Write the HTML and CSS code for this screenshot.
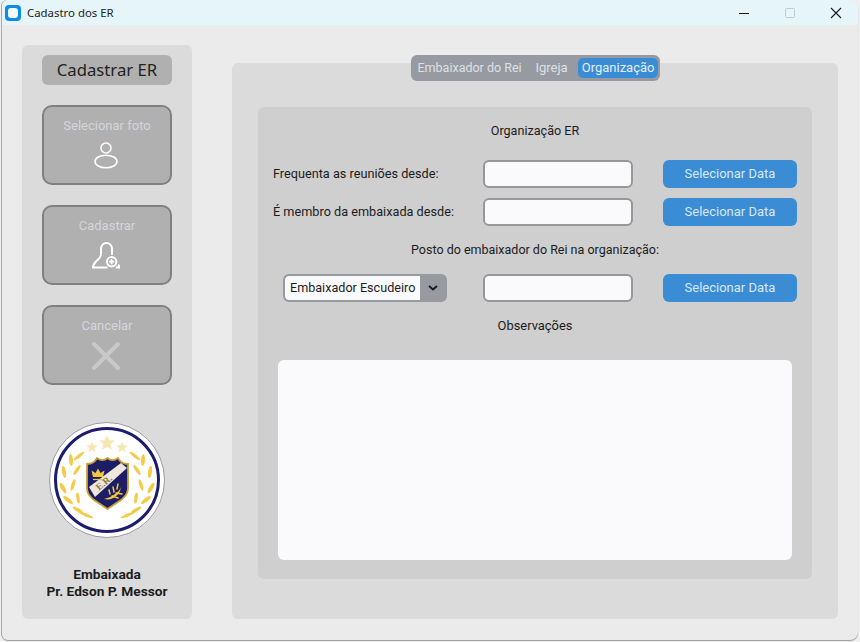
FILE: index.html
```html
<!DOCTYPE html>
<html lang="en">
<head>
  <meta charset="UTF-8" />
  <meta name="viewport" content="width=device-width, initial-scale=1.0"/>
  <title>Cadastro dos ER</title>
  <link rel="stylesheet" href="styles.css">
</head>
<body>

  <div class="window">
    <div class="title-bar">
      <div class="app-icon"><span></span></div>
      <div class="app-title">Cadastro dos ER</div>
      <div class="win-controls">
        <svg width="12" height="12" viewBox="0 0 12 12"><path d="M1 6.500h10" stroke="#1a1a1a" stroke-width="1"/></svg>
        <svg width="12" height="12" viewBox="0 0 12 12"><rect x="1.500" y="1.500" width="9" height="9" rx="1" fill="none" stroke="#c4c9cc"/></svg>
        <svg width="12" height="12" viewBox="0 0 12 12"><path d="M1 1l10 10M11 1L1 11" stroke="#1a1a1a" stroke-width="1.100"/></svg>
      </div>
    </div>

    <div class="content">
      <aside class="sidebar">
        <div class="side-title">Cadastrar ER</div>

        <div class="side-button">
          <span>Selecionar foto</span>
          <svg width="28" height="28" viewBox="0 0 28 28" fill="none" stroke="#fff" stroke-width="1.600">
            <circle cx="14" cy="7" r="5"/>
            <ellipse cx="14" cy="20.500" rx="11" ry="6.300"/>
          </svg>
        </div>

        <div class="side-button">
          <span>Cadastrar</span>
          <svg width="28" height="28" viewBox="0 0 28 28" fill="none" stroke="#fff" stroke-width="2">
            <path d="M9 13.500V7.500a5.500 5.500 0 0 1 11 0V14"/>
            <path d="M9 13.500c0 3-2 4-4.500 6.500-2.500 2.500-3.500 4-3.500 6.500h14.500"/>
            <path d="M24 26.500h3.500c0-1-.5-2-1.500-2.500"/>
            <circle cx="19.700" cy="20.700" r="4.700"/>
            <path d="M19.700 18.200v5M17.200 20.700h5" stroke-width="1.800"/>
          </svg>
        </div>

        <div class="side-button">
          <span>Cancelar</span>
          <svg width="30" height="30" viewBox="0 0 30 30" fill="none" stroke="#c9c9c9" stroke-width="4" stroke-linecap="round">
            <path d="M3 3l24 24M27 3L3 27"/>
          </svg>
        </div>

        <svg class="logo" width="116" height="116" viewBox="0 0 116 116">
          <circle cx="58" cy="58" r="57.500" fill="#fff" stroke="#9a9aa6" stroke-width="1"/>
          <circle cx="58" cy="58" r="51.500" fill="#fff" stroke="#1d1d6e" stroke-width="3"/>
          <g fill="#f6e6b2">
            <path d="M58 13l2.200 5.200 5.600.4-4.300 3.600 1.400 5.500-4.900-3-4.900 3 1.400-5.500-4.300-3.600 5.600-.4z"/>
            <path d="M43 19.500l1.600 3.800 4.100.3-3.100 2.700 1 4-3.600-2.200-3.600 2.200 1-4-3.100-2.700 4.100-.3z"/>
            <path d="M73 19.500l1.600 3.800 4.100.3-3.100 2.700 1 4-3.600-2.200-3.600 2.200 1-4-3.100-2.700 4.100-.3z"/>
          </g>
          <g id="wreath" fill="#f5cb4b">
            <ellipse cx="30" cy="34" rx="1.700" ry="6.500" transform="rotate(52 30 34)"/>
            <ellipse cx="22" cy="38" rx="2" ry="6" transform="rotate(-4 22 38)"/>
            <ellipse cx="28" cy="48" rx="1.700" ry="6" transform="rotate(35 28 48)"/>
            <ellipse cx="15" cy="50" rx="2" ry="6" transform="rotate(-10 15 50)"/>
            <ellipse cx="24" cy="63" rx="1.700" ry="6" transform="rotate(18 24 63)"/>
            <ellipse cx="14" cy="66" rx="2" ry="6" transform="rotate(-30 14 66)"/>
            <ellipse cx="29" cy="76" rx="1.700" ry="5.500" transform="rotate(-8 29 76)"/>
            <ellipse cx="19" cy="78" rx="2" ry="6" transform="rotate(-52 19 78)"/>
            <ellipse cx="29" cy="88" rx="1.800" ry="6" transform="rotate(-60 29 88)"/>
            <ellipse cx="37" cy="93" rx="1.500" ry="8" transform="rotate(-68 37 93)"/>
          </g>
          <use href="#wreath" transform="translate(116 0) scale(-1 1)"/>

          <path d="M38 42C43 42 46 40 48 36C52 39 55 39 58.500 36C62 39 65 39 69 36C71 40 74 42 79 42V66C79 76 68 80 58.500 87C49 80 38 76 38 66Z" fill="#1d1d66" stroke="#c9a234" stroke-width="1.800"/>
          <path d="M40 65L72 41L78 46L46 75Z" fill="#ece7da"/>
          <path d="M44 55l-1.500-6.500 4 2.500 2.500-4.500 2.500 4.500 4-2.500-1.500 6.500z" fill="#f4c63c"/>
          <path d="M44 57.500h11" stroke="#f4c63c" stroke-width="1.200"/>
          <text class="logo-text" x="57" y="63" transform="rotate(-40 57 63)">E.R.</text>
          <path d="M55 77c5-1 8-3 11-5 3-2 5-4 6-7-1 5-2 7-5 9-3 3-7 4-12 3z" fill="#f4c63c"/>
          <path d="M61 72l-1-4M65 70l-1-5M68 67l1-5M63 74l6 2M67 71l6 1" stroke="#f4c63c" stroke-width="1.500" stroke-linecap="round"/>
        </svg>

        <div class="side-name">Embaixada<br>Pr. Edson P. Messor</div>
      </aside>

      <main class="main">
        <div class="tabs">
          <div class="tab tab-long">Embaixador do Rei</div>
          <div class="tab">Igreja</div>
          <div class="tab active">Organização</div>
        </div>

        <section class="panel">
          <div class="form">
            <h2 class="form-title">Organização ER</h2>

            <div class="row">
              <label class="row-label">Frequenta as reuniões desde:</label>
              <input class="date-input" type="text">
              <button class="date-button">Selecionar Data</button>
            </div>

            <div class="row">
              <label class="row-label">É membro da embaixada desde:</label>
              <input class="date-input" type="text">
              <button class="date-button">Selecionar Data</button>
            </div>

            <div class="row-title">Posto do embaixador do Rei na organização:</div>

            <div class="row">
              <div class="combo-cell">
                <div class="combo">
                  <div class="combo-value">Embaixador Escudeiro</div>
                  <div class="combo-arrow">
                    <svg width="10" height="6" viewBox="0 0 10 6" fill="none" stroke="#1a1a1a" stroke-width="2"><path d="M1 1l4 3.400L9 1"/></svg>
                  </div>
                </div>
              </div>
              <input class="date-input" type="text">
              <button class="date-button">Selecionar Data</button>
            </div>

            <div class="notes-title">Observações</div>
            <div class="notes"></div>
          </div>
        </section>
      </main>
    </div>
  </div>

</body>
</html>
```

FILE: styles.css
```css
body {
  margin: 0;
  height: 642px;
  overflow: hidden;
  background: #f0f0f0;
  font-family: Roboto, sans-serif;
  color: #1c1c1c;
}

.window {
  width: 856px;
  height: 640px;
  margin-left: 2px;
  background: #ebebeb;
  border-radius: 6px 8px 8px 6px;
  box-shadow: -1px 0 0 #a8a8a8, 0 1px 1px #9a9a9a;
  display: flex;
  flex-direction: column;
  overflow: hidden;
}

.title-bar {
  height: 25px;
  flex-shrink: 0;
  background: #e6f5f9;
  display: flex;
  align-items: center;
  padding-left: 3px;
}

.app-icon {
  width: 16px;
  height: 16px;
  border-radius: 4px;
  background: #0d8ce6;
  display: flex;
  align-items: center;
  justify-content: center;
}

.app-icon span {
  width: 10px;
  height: 10px;
  border-radius: 3px;
  background: #f4fbff;
}

.app-title {
  margin-left: 6px;
  font-family: "Noto Sans", sans-serif;
  font-size: 11.4px;
  color: #222;
}

.win-controls {
  margin-left: auto;
  display: flex;
  align-items: center;
  gap: 34px;
  padding-right: 16px;
}

.content {
  flex: 1;
  display: flex;
  padding: 20px 20px 21px;
}

.sidebar {
  width: 170px;
  margin-right: 40px;
  box-sizing: border-box;
  padding: 10px 20px 0;
  background: #dbdbdb;
  border-radius: 6px;
  display: flex;
  flex-direction: column;
  align-items: center;
  gap: 20px;
}

.side-title {
  width: 100%;
  height: 30px;
  background: #b0b0b0;
  border-radius: 6px;
  font-family: "Noto Sans", sans-serif;
  font-size: 16.7px;
  line-height: 30px;
  text-align: center;
  color: #222;
}

.side-button {
  width: 100%;
  height: 80px;
  flex-shrink: 0;
  box-sizing: border-box;
  border: 2px solid #808080;
  border-radius: 10px;
  background: #b0b0b0;
  color: #d3d6da;
  font-size: 13px;
  display: flex;
  flex-direction: column;
  align-items: center;
  padding-top: 11px;
  gap: 8px;
}

.side-button svg {
  margin-right: 2px;
}

.logo {
  margin-top: 17px;
  flex-shrink: 0;
}

.logo-text {
  font-family: "Liberation Serif", serif;
  font-size: 9.5px;
  font-weight: bold;
  fill: #8a7a4a;
  text-anchor: middle;
}

.side-name {
  margin-top: 8px;
  font-size: 13.7px;
  font-weight: bold;
  line-height: 17px;
  text-align: center;
  white-space: nowrap;
  color: #1c1c1c;
}

.main {
  width: 606px;
  display: flex;
  flex-direction: column;
  align-items: center;
}

.tabs {
  position: relative;
  z-index: 1;
  margin-top: 10px;
  height: 26px;
  width: 249px;
  box-sizing: border-box;
  padding: 3px;
  background: #979aa0;
  border-radius: 6px;
  display: flex;
  font-size: 13px;
  color: #dce1e6;
}

.tab {
  flex-shrink: 0;
  padding: 0 4px;
  margin-right: 6px;
  line-height: 20px;
  border-radius: 5px;
  white-space: nowrap;
}

.tab-long {
  width: 112px;
  box-sizing: border-box;
  font-size: 12.5px;
}

.tab.active {
  margin-right: 0;
  background: #3a8cd4;
  color: #e3eef8;
}

.panel {
  flex: 1;
  width: 100%;
  margin-top: -18px;
  box-sizing: border-box;
  padding: 44px 26px 40px;
  background: #dbdbdb;
  border-radius: 6px;
}

.form {
  height: 100%;
  box-sizing: border-box;
  padding: 0 20px;
  background: #cfcfcf;
  border-radius: 6px;
  display: flex;
  flex-direction: column;
}

.form-title {
  margin: 0;
  height: 53px;
  font-size: 12.6px;
  font-weight: normal;
  line-height: 47px;
  text-align: center;
}

.row {
  display: grid;
  grid-template-columns: 180px 150px 134px;
  column-gap: 30px;
  height: 28px;
  margin: 0 -5px 10px;
  align-items: center;
  font-size: 12.7px;
}

.row-label {
  padding-bottom: 1px;
  white-space: nowrap;
  color: #1c1c1c;
}

.date-input {
  box-sizing: border-box;
  width: 150px;
  height: 28px;
  margin: 0;
  border: 2px solid #979797;
  border-radius: 6px;
  background: #fafafc;
}

.date-button {
  height: 28px;
  padding: 0 0 1px;
  border: none;
  border-radius: 6px;
  background: #3a8cd4;
  color: #d7e8f7;
  font-family: Roboto, sans-serif;
  font-size: 13px;
}

.row-title {
  height: 38px;
  font-size: 12.5px;
  line-height: 28px;
  text-align: center;
}

.combo-cell {
  padding-left: 10px;
}

.combo {
  width: 164px;
  height: 28px;
  box-sizing: border-box;
  border: 2px solid #979aa0;
  border-radius: 6px;
  background: #979aa0;
  display: flex;
  overflow: hidden;
}

.combo-value {
  width: 135px;
  padding-left: 5px;
  box-sizing: border-box;
  background: #fafafc;
  border-radius: 4px 0 0 4px;
  font-size: 12.6px;
  line-height: 24px;
  white-space: nowrap;
}

.combo-arrow {
  flex: 1;
  display: flex;
  align-items: center;
  justify-content: center;
}

.notes-title {
  height: 48px;
  font-size: 12.9px;
  line-height: 28px;
  text-align: center;
}

.notes {
  height: 200px;
  background: #fafafc;
  border-radius: 6px;
}
```
